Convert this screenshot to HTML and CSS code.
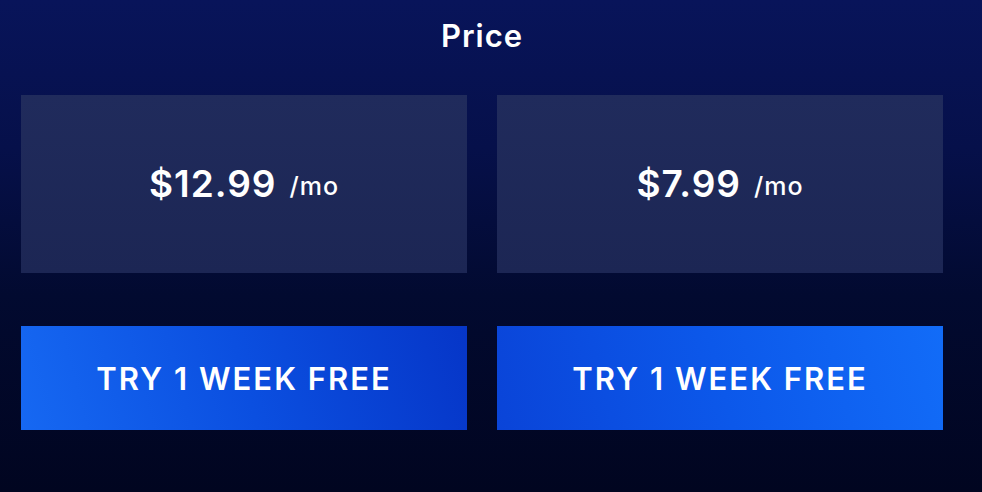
FILE: index.html
```html
<!DOCTYPE html>
<html lang="en">
<head>
    <meta charset="UTF-8">
    <meta name="viewport" content="width=device-width, initial-scale=1.0">
    <title>Price</title>
    <link rel="stylesheet" href="styles.css">
</head>
<body>
    <h1 class="title">Price</h1>

    <div class="plans">
        <div class="plan">
            <div class="price-card">
                <span class="amount">$12.99</span>
                <span class="period">/mo</span>
            </div>
            <button class="trial-btn trial-left">TRY 1 WEEK FREE</button>
        </div>
        <div class="plan">
            <div class="price-card">
                <span class="amount">$7.99</span>
                <span class="period">/mo</span>
            </div>
            <button class="trial-btn trial-right">TRY 1 WEEK FREE</button>
        </div>
    </div>
</body>
</html>
```

FILE: styles.css
```css
/* General Reset */
* {
    margin: 0;
    padding: 0;
    box-sizing: border-box;
}

html, body {
    width: 982px;
    height: 492px;
    overflow: hidden;
}

body {
    font-family: Inter, "Open Sans", Arial, sans-serif;
    background: linear-gradient(180deg, #08145a 0%, #06104a 30%, #020a30 60%, #010520 100%);
    color: #fff;
    padding: 16px 39px 0 21px;
}

.title {
    text-align: center;
    font-size: 31px;
    font-weight: 600;
    letter-spacing: 1px;
    line-height: 40px;
    margin-bottom: 39px;
}

.plans {
    display: flex;
    gap: 30px;
}

.plan {
    width: 446px;
    display: flex;
    flex-direction: column;
    gap: 53px;
}

.price-card {
    height: 178px;
    background: linear-gradient(180deg, #202b5c 0%, #1c2654 100%);
    display: flex;
    align-items: center;
    justify-content: center;
    gap: 13px;
    padding-bottom: 2px;
}

.amount {
    font-size: 37px;
    font-weight: 600;
    letter-spacing: 1px;
}

.period {
    font-size: 25px;
    font-weight: 500;
    letter-spacing: 1px;
    padding-top: 6px;
}

.trial-btn {
    height: 104px;
    border: none;
    color: #fff;
    font-family: inherit;
    font-size: 31px;
    font-weight: 600;
    letter-spacing: 2px;
    cursor: pointer;
}

.trial-left {
    background: linear-gradient(75deg, #1668f2 0%, #0b4fe0 50%, #0636c8 100%);
}

.trial-right {
    background: linear-gradient(75deg, #0a44d8 0%, #0c58ea 50%, #126cf8 100%);
}
```
